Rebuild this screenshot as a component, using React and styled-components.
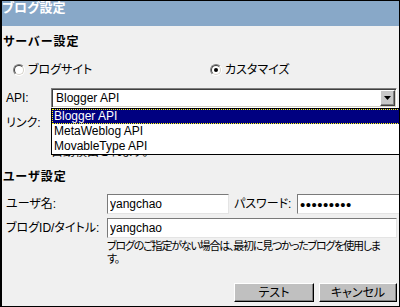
import styled, { createGlobalStyle } from "styled-components";

const GlobalStyle = createGlobalStyle`
  html, body {
    margin: 0;
    padding: 0;
    background: #f0f0f0;
    overflow: hidden;
  }
  body {
    font-family: "Liberation Sans", "Noto Sans CJK JP", sans-serif;
    font-size: 12px;
    font-feature-settings: "palt";
    color: #000;
  }
`;

const Window = styled.div`
  width: 400px;
  height: 307px;
  box-sizing: border-box;
  border: 1px solid #000;
  border-left-width: 2px;
  background: #f0f0f0;
  overflow: hidden;
  display: flex;
  flex-direction: column;
`;

const TitleBar = styled.div`
  flex: none;
  height: 25px;
  background: #88a8c8;
  color: #fff;
  font-weight: bold;
  font-size: 13px;
  line-height: 13px;
`;

const Body = styled.div`
  flex: 1;
  display: flex;
  flex-direction: column;
  padding: 9px 2px 4px 1px;
`;

const SectionTitle = styled.div`
  font-weight: bold;
  font-size: 12px;
  line-height: 14px;
  letter-spacing: 1px;
  margin-top: ${p => p.$top}px;
`;

const RadioRow = styled.div`
  display: grid;
  grid-template-columns: 197px auto;
  margin-top: 14px;
  padding-left: 10px;
  line-height: 14px;
`;

const RadioOption = styled.label`
  display: flex;
  align-items: center;
  gap: 3px;
`;

const Radio = styled.span`
  position: relative;
  flex: none;
  width: 12px;
  height: 12px;
  box-sizing: border-box;
  border-radius: 50%;
  border: 1px solid;
  border-color: #808080 #fff #fff #808080;
  background: #fff;
  &::before {
    content: "";
    position: absolute;
    inset: 0;
    border-radius: 50%;
    border: 1px solid;
    border-color: #404040 #d4d0c8 #d4d0c8 #404040;
  }
  &::after {
    content: "";
    display: ${p => (p.$checked ? "block" : "none")};
    position: absolute;
    left: 3px;
    top: 3px;
    width: 4px;
    height: 4px;
    border-radius: 50%;
    background: #000;
  }
`;

const FormRow = styled.div`
  display: flex;
  align-items: ${p => p.$align || "center"};
  margin-top: ${p => p.$top}px;
  padding-left: 3px;
`;

const Label = styled.div`
  flex: none;
  width: ${p => p.$width}px;
  line-height: 14px;
  white-space: nowrap;
  padding-top: ${p => p.$padTop || 0}px;
`;

const SelectWrap = styled.div`
  position: relative;
  width: 349px;
  z-index: 2;
`;

const SelectBox = styled.div`
  display: flex;
  align-items: center;
  height: 20px;
  box-sizing: border-box;
  padding: 1px;
  border: 1px solid;
  border-color: #808080 #fff #fff #808080;
  box-shadow: inset 1px 1px #404040, inset -1px -1px #d4d0c8;
  background: #fff;
`;

const SelectValue = styled.span`
  flex: 1;
  padding-left: 3px;
  line-height: 14px;
`;

const ArrowButton = styled.span`
  flex: none;
  width: 15px;
  height: 16px;
  box-sizing: border-box;
  display: flex;
  align-items: center;
  justify-content: center;
  background: #c8c8c8;
  border: 1px solid;
  border-color: #fff #404040 #404040 #fff;
  box-shadow: inset -1px -1px #808080;
`;

const OptionList = styled.ul`
  position: absolute;
  top: 100%;
  left: 0;
  width: 350px;
  margin: 0;
  padding: 0;
  list-style: none;
  box-sizing: border-box;
  border: 1px solid #000;
  background: #fff;
`;

const OptionItem = styled.li`
  height: 15px;
  line-height: 15px;
  padding-left: 2px;
  box-sizing: border-box;
  background: ${p => (p.$selected ? "#000080" : "#fff")};
  color: ${p => (p.$selected ? "#fff" : "#000")};
  outline: ${p => (p.$selected ? "1px dotted #ffff00" : "none")};
  outline-offset: -1px;
`;

const TextField = styled.input`
  width: ${p => p.$width}px;
  height: 20px;
  box-sizing: border-box;
  margin: 0;
  padding: 0 2px;
  border: 1px solid;
  border-color: #7a7a7a #e4e4e4 #e4e4e4 #7a7a7a;
  background: #fff;
  font-family: "Liberation Sans", "Noto Sans CJK JP", sans-serif;
  font-size: 12px;
  color: #000;
  outline: none;
  flex: none;
`;

const PasswordField = styled(TextField)`
  font-size: 15px;
  letter-spacing: 0.5px;
`;

const InlineLabel = styled.span`
  flex: none;
  margin-left: 5px;
  width: 63px;
  line-height: 14px;
  white-space: nowrap;
`;

const Hint = styled.div`
  margin-top: ${p => p.$top}px;
  padding-left: ${p => p.$indent}px;
  line-height: 13px;
  font-size: ${p => p.$size || 12}px;
  white-space: nowrap;
  letter-spacing: ${p => p.$spacing || 0}px;
`;

const ButtonBar = styled.div`
  margin-top: auto;
  display: flex;
  justify-content: flex-end;
  gap: 5px;
`;

const Button = styled.button`
  width: ${p => p.$width}px;
  height: 19px;
  box-sizing: border-box;
  margin: 0;
  padding: 0;
  background: #c0c0c0;
  border: 1px solid;
  border-color: #fff #000 #000 #fff;
  box-shadow: inset -1px -1px #808080;
  font-family: "Liberation Sans", "Noto Sans CJK JP", sans-serif;
  font-feature-settings: "palt";
  font-size: 12px;
  line-height: 14px;
  color: #000;
`;

const apiOptions = ["Blogger API", "MetaWeblog API", "MovableType API"];

export default function App() {
  return (
    <>
      <GlobalStyle />
      <Window>
        <TitleBar>ブログ設定</TitleBar>
        <Body>
          <SectionTitle $top={0}>サーバー設定</SectionTitle>
          <RadioRow>
            <RadioOption>
              <Radio />
              ブログサイト
            </RadioOption>
            <RadioOption>
              <Radio $checked />
              カスタマイズ
            </RadioOption>
          </RadioRow>
          <FormRow $top={11}>
            <Label $width={45}>API:</Label>
            <SelectWrap>
              <SelectBox>
                <SelectValue>Blogger API</SelectValue>
                <ArrowButton>
                  <svg width="7" height="4" viewBox="0 0 7 4">
                    <path d="M0 0h7L3.5 4z" fill="#000" />
                  </svg>
                </ArrowButton>
              </SelectBox>
              <OptionList>
                {apiOptions.map((o, i) => (
                  <OptionItem key={o} $selected={i === 0}>
                    {o}
                  </OptionItem>
                ))}
              </OptionList>
            </SelectWrap>
          </FormRow>
          <FormRow $top={3} $align="flex-start">
            <Label $width={45} $padTop={5}>リンク:</Label>
            <TextField $width={349} defaultValue="" />
          </FormRow>
          <Hint $top={2} $indent={48}>
            ブログのトップページのURLを入力してください。
            <br />
            自動検出されます。
          </Hint>
          <SectionTitle $top={11}>ユーザ設定</SectionTitle>
          <FormRow $top={10}>
            <Label $width={101}>ユーザ名:</Label>
            <TextField $width={122} defaultValue="yangchao" />
            <InlineLabel>パスワード:</InlineLabel>
            <PasswordField type="password" $width={110} defaultValue="yangchao1" />
          </FormRow>
          <FormRow $top={4}>
            <Label $width={101}>ブログID/タイトル:</Label>
            <TextField $width={290} defaultValue="yangchao" />
          </FormRow>
          <Hint $top={2} $indent={104} $size={11} $spacing={-1.2}>
            ブログのご指定がない場合は、最初に見つかったブログを使用しま
            <br />
            す。
          </Hint>
          <ButtonBar>
            <Button $width={80}>テスト</Button>
            <Button $width={78}>キャンセル</Button>
          </ButtonBar>
        </Body>
      </Window>
    </>
  );
}
